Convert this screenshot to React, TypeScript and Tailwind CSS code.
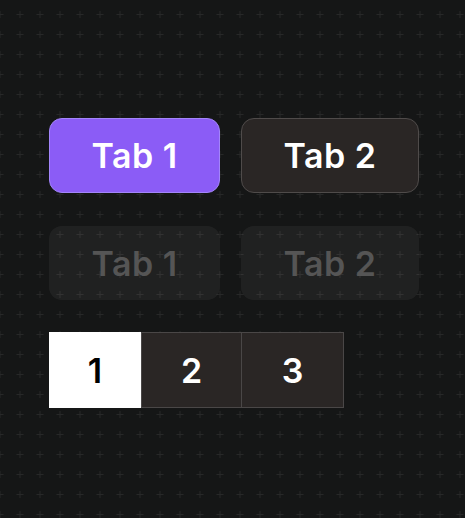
import React from "react";

const font = { fontFamily: "Inter, 'Noto Sans', sans-serif" };

function GridBackdrop() {
  return (
    <svg className="absolute inset-0 h-full w-full" aria-hidden="true">
      <defs>
        <pattern id="plus" x="0" y="-6" width="20" height="20" patternUnits="userSpaceOnUse">
          <path d="M16.5 20.5h7M20 17v7" stroke="#272828" strokeWidth="1" fill="none" />
          <path d="M-3.5 20.5h7M0 17v7" stroke="#272828" strokeWidth="1" fill="none" />
          <path d="M16.5 0.5h7M20 -3v7" stroke="#272828" strokeWidth="1" fill="none" />
          <path d="M-3.5 0.5h7M0 -3v7" stroke="#272828" strokeWidth="1" fill="none" />
        </pattern>
      </defs>
      <rect width="100%" height="100%" fill="url(#plus)" />
    </svg>
  );
}

export default function App() {
  return (
    <div
      className="relative h-[518px] w-[465px] overflow-hidden bg-[#151616]"
      style={font}
    >
      <GridBackdrop />
      <div className="relative flex flex-col pl-[49px] pt-[118px]">
        <div className="flex gap-[21px]">
          <button className="flex h-[75px] w-[171px] items-center justify-center rounded-[13px] border border-[#a385fa] bg-[#8b5cf6] text-[34px] font-semibold tracking-[0.5px] text-white">
            Tab 1
          </button>
          <button className="flex h-[75px] w-[178px] items-center justify-center rounded-[13px] border border-[#4f4b4a] bg-[#2a2625] text-[34px] font-semibold tracking-[0.5px] text-white">
            Tab 2
          </button>
        </div>
        <div className="mt-[33px] flex gap-[21px]">
          <button
            disabled
            className="flex h-[74px] w-[171px] items-center justify-center rounded-[13px] bg-[#ffffff0d] text-[34px] font-semibold tracking-[0.5px] text-[#555555]"
          >
            Tab 1
          </button>
          <button
            disabled
            className="flex h-[74px] w-[178px] items-center justify-center rounded-[13px] bg-[#ffffff0d] text-[34px] font-semibold tracking-[0.5px] text-[#555555]"
          >
            Tab 2
          </button>
        </div>
        <div className="mt-[32px] flex">
          <button className="flex h-[76px] w-[92px] items-center justify-center bg-white text-[34px] font-semibold text-black">
            1
          </button>
          <button className="flex h-[76px] w-[101px] items-center justify-center border border-[#4a4747] bg-[#2a2625] text-[34px] font-semibold text-white">
            2
          </button>
          <button className="flex h-[76px] w-[102px] items-center justify-center border border-l-0 border-[#4a4747] bg-[#2a2625] text-[34px] font-semibold text-white">
            3
          </button>
        </div>
      </div>
    </div>
  );
}
